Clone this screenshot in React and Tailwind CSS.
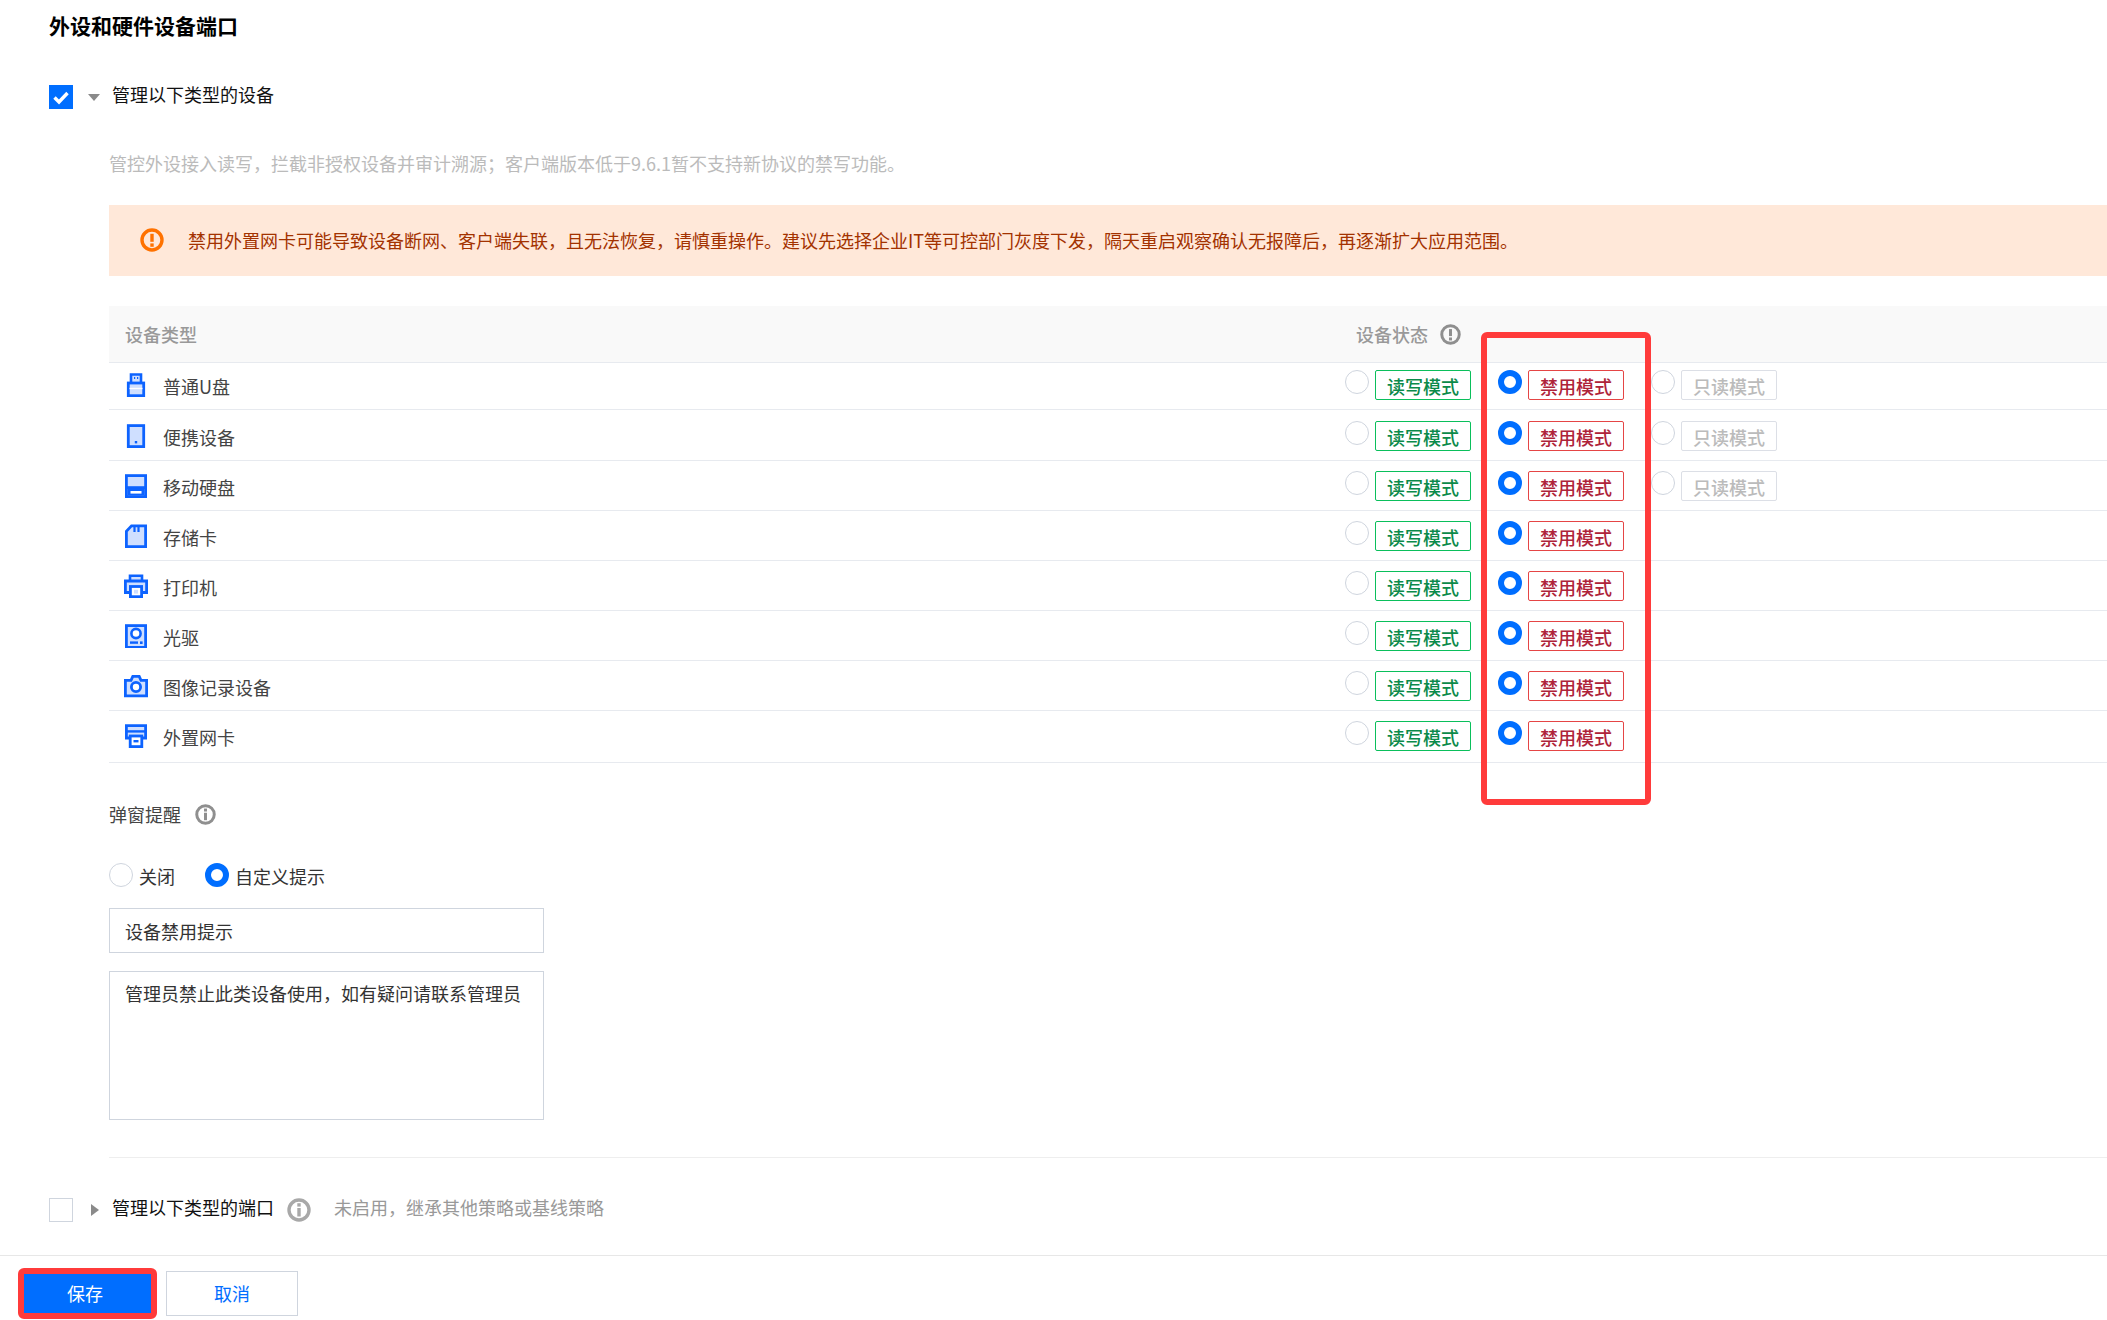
import React from "react";

const BLUE = "#0d63ff";
const PALE = "#cfdfff";

const icons = {
  usb: (
    <>
      <path d="M7 10V1.5h10V10" fill={PALE} stroke={BLUE} strokeWidth="2.6" />
      <rect x="4.3" y="10" width="15.4" height="12.7" fill={PALE} stroke={BLUE} strokeWidth="2.8" />
      <path d="M5.5 15.5h13" stroke="#fff" strokeWidth="1.4" />
      <path d="M10 5h1.2M13 5h1.2" stroke={BLUE} strokeWidth="2.2" />
    </>
  ),
  tablet: (
    <>
      <rect x="4.3" y="1.6" width="15.4" height="21" fill={PALE} stroke={BLUE} strokeWidth="2.8" />
      <rect x="10.8" y="17" width="2.4" height="2.4" fill={BLUE} />
    </>
  ),
  disk: (
    <>
      <rect x="2.4" y="1.6" width="19.2" height="21" fill={PALE} stroke={BLUE} strokeWidth="2.8" />
      <path d="M2 13.6h20" stroke={BLUE} strokeWidth="2.8" />
      <rect x="3.6" y="14.9" width="16.8" height="6.6" fill={BLUE} />
      <rect x="6.5" y="17" width="11" height="2.6" fill="#fff" />
    </>
  ),
  card: (
    <>
      <path d="M7.5 1.8H21.6V22.6H2.4V7.2Z" fill={PALE} stroke={BLUE} strokeWidth="2.8" />
      <path d="M10.5 2.5v5.5M14.5 2.5v5.5" stroke={BLUE} strokeWidth="2.2" />
    </>
  ),
  printer: (
    <>
      <path d="M6 7V1.8h12V7" fill={PALE} stroke={BLUE} strokeWidth="2.6" />
      <path d="M6 18.5H1.4V7h21.2v11.5H18" fill={PALE} stroke={BLUE} strokeWidth="2.8" />
      <rect x="6.4" y="12.5" width="11.2" height="10.2" fill="#fff" stroke={BLUE} strokeWidth="2.8" />
      <rect x="10" y="15.8" width="4" height="3.8" fill={PALE} />
    </>
  ),
  optical: (
    <>
      <rect x="2.4" y="1.6" width="19.2" height="21.8" fill={PALE} stroke={BLUE} strokeWidth="2.8" />
      <circle cx="12" cy="9.5" r="4.6" fill="#fff" stroke={BLUE} strokeWidth="2.6" />
      <path d="M6 18.6h8" stroke={BLUE} strokeWidth="2.4" />
      <rect x="16" y="17.4" width="2.6" height="2.6" fill={BLUE} />
    </>
  ),
  camera: (
    <>
      <path d="M1.4 6.4H7L8.8 2.4H15.2L17 6.4H22.6V21.8H1.4Z" fill={PALE} stroke={BLUE} strokeWidth="2.8" />
      <circle cx="12" cy="13" r="4.6" fill="#fff" stroke={BLUE} strokeWidth="2.8" />
    </>
  ),
  nic: (
    <>
      <path d="M6 14H2.4V1.6h19.2V14H18" fill={PALE} stroke={BLUE} strokeWidth="2.8" />
      <path d="M2 7.4h20" stroke={BLUE} strokeWidth="2.4" />
      <rect x="6.2" y="12" width="11.6" height="10.6" fill="#fff" stroke={BLUE} strokeWidth="2.8" />
      <path d="M9.5 17.2h5" stroke={BLUE} strokeWidth="2.4" />
    </>
  ),
};

const devices = [
  { name: "普通U盘", icon: "usb", h: "h-[47px]", pt: "pt-[7px]", lift: "pt-[2px]", readonly: true },
  { name: "便携设备", icon: "tablet", h: "h-[51px]", pt: "pt-[11px]", lift: "pt-[1px]", readonly: true },
  { name: "移动硬盘", icon: "disk", h: "h-[50px]", pt: "pt-[10px]", lift: "pt-[1px]", readonly: true },
  { name: "存储卡", icon: "card", h: "h-[50px]", pt: "pt-[10px]", lift: "pt-[1px]" },
  { name: "打印机", icon: "printer", h: "h-[50px]", pt: "pt-[10px]", lift: "pt-[1px]" },
  { name: "光驱", icon: "optical", h: "h-[50px]", pt: "pt-[10px]", lift: "pt-[1px]" },
  { name: "图像记录设备", icon: "camera", h: "h-[50px]", pt: "pt-[10px]", lift: "pt-[1px]" },
  { name: "外置网卡", icon: "nic", h: "h-[52px]", pt: "pt-[10px]", lift: "pt-[1px]" },
];

const Radio = ({ on }) =>
  on ? (
    <span className="block w-6 h-6 shrink-0 rounded-full bg-white border-[6px] border-[#006eff]" />
  ) : (
    <span className="block w-6 h-6 shrink-0 rounded-full bg-white border border-[#cfd5de]" />
  );

const Tag = ({ className, children }) => (
  <span className={`flex items-center justify-center w-[96px] h-[30px] ml-[6px] pt-[1px] shrink-0 rounded-[2px] border text-[18px] leading-[26px] ${className}`}>
    {children}
  </span>
);

const Info = ({ className, bang }) => (
  <svg viewBox="0 0 24 24" className={className}>
    <circle cx="12" cy="12" r="10" fill="none" stroke="currentColor" strokeWidth="3.4" />
    {bang ? (
      <>
        <path d="M12 5.8v8" stroke="currentColor" strokeWidth="3.4" />
        <rect x="10.3" y="15.4" width="3.4" height="3.4" fill="currentColor" />
      </>
    ) : (
      <>
        <rect x="10.3" y="5.2" width="3.4" height="3.4" fill="currentColor" />
        <path d="M12 10v8.5" stroke="currentColor" strokeWidth="3.4" />
      </>
    )}
  </svg>
);

export default function App() {
  return (
    <div
      className="relative w-[2107px] h-[1320px] overflow-hidden bg-white text-[18px]"
      style={{ fontFamily: '"Noto Sans CJK SC", "Noto Sans", sans-serif' }}
    >
      <div className="pl-[49px]">
        {/* Title */}
        <h1 className="mt-[9px] text-[21px] leading-[32px] font-bold text-black">外设和硬件设备端口</h1>

        {/* Manage devices */}
        <div className="flex items-center h-6 mt-[44px]">
          <span className="flex items-center justify-center w-6 h-6 bg-[#006eff]">
            <svg viewBox="0 0 24 24" className="w-6 h-6">
              <path d="M5.5 12.5l4.5 4.5 8.5-9" fill="none" stroke="#fff" strokeWidth="3.4" />
            </svg>
          </span>
          <svg viewBox="0 0 12 7" className="w-3 h-[7px] ml-[15px]">
            <path d="M0 0h12L6 7Z" fill="#8a8a8a" />
          </svg>
          <span className="ml-[12px] -mt-[6px] leading-[28px] text-[#111]">管理以下类型的设备</span>
        </div>
      </div>

      <div className="pl-[109px]">
        <p className="mt-[40px] leading-[28px] text-[#bbbbbb]">
          管控外设接入读写，拦截非授权设备并审计溯源；客户端版本低于9.6.1暂不支持新协议的禁写功能。
        </p>

        {/* Alert */}
        <div className="flex items-center h-[71px] mt-[28px] pl-[31px] bg-[#ffe8d9]">
          <Info bang className="w-6 h-6 -mt-[2px] text-[#ff7200]" />
          <span className="ml-[24px] -mt-[2px] leading-[28px] text-[#a33200]">
            禁用外置网卡可能导致设备断网、客户端失联，且无法恢复，请慎重操作。建议先选择企业IT等可控部门灰度下发，隔天重启观察确认无报障后，再逐渐扩大应用范围。
          </span>
        </div>

        {/* Device table */}
        <div className="mt-[30px]">
          <div className="flex items-center h-[57px] bg-[#f9f9f9] border-b border-[#e7eaef] text-[#999999] font-medium">
            <span className="w-[1247px] pl-4 shrink-0">设备类型</span>
            <span>设备状态</span>
            <Info bang className="w-[21px] h-[21px] ml-[12px] text-[#8f8f8f]" />
          </div>
          {devices.map((d) => (
            <div key={d.name} className={`flex items-start border-b border-[#e7eaef] ${d.h} ${d.pt}`}>
              <div className="flex items-center w-[1236px] h-6 mt-[3px] pl-[15px] shrink-0">
                <svg viewBox="0 0 24 24" className="w-6 h-6 shrink-0">
                  {icons[d.icon]}
                </svg>
                <span className={`ml-[15px] leading-[28px] text-[#444444] ${d.lift}`}>{d.name}</span>
              </div>
              <Radio />
              <Tag className="border-[#0abf5b] text-[#0b8a4a] font-medium">读写模式</Tag>
              <span className="ml-[27px]">
                <Radio on />
              </span>
              <Tag className="border-[#e54545] text-[#ae2339] font-medium">禁用模式</Tag>
              {d.readonly && (
                <>
                  <span className="ml-[27px]">
                    <Radio />
                  </span>
                  <Tag className="border-[#dcdfe6] text-[#bbbbbb] font-medium">只读模式</Tag>
                </>
              )}
            </div>
          ))}
        </div>

        {/* Popup reminder */}
        <div className="flex items-center h-7 mt-[37px]">
          <span className="leading-[28px] text-[#444444]">弹窗提醒</span>
          <Info className="w-[21px] h-[21px] ml-[14px] text-[#8f8f8f]" />
        </div>

        <div className="flex items-center h-6 mt-[35px] text-[#333333]">
          <Radio />
          <span className="ml-[6px] pt-[2px] leading-[28px]">关闭</span>
          <span className="ml-[30px]">
            <Radio on />
          </span>
          <span className="ml-[6px] pt-[2px] leading-[28px]">自定义提示</span>
        </div>

        <input
          readOnly
          value="设备禁用提示"
          className="block w-[435px] h-[45px] mt-[21px] px-[15px] border border-[#cfd5de] text-[#333333] outline-none"
        />
        <textarea
          readOnly
          value="管理员禁止此类设备使用，如有疑问请联系管理员"
          className="block w-[435px] h-[149px] mt-[18px] px-[15px] py-[7px] leading-[28px] border border-[#cfd5de] text-[#333333] outline-none resize-none"
        />

        <div className="h-px mt-[37px] bg-[#eeeeee]" />
      </div>

      {/* Manage ports */}
      <div className="flex items-center h-6 mt-[40px] pl-[49px]">
        <span className="w-6 h-6 border border-[#cfd5de]" />
        <svg viewBox="0 0 8 12" className="w-2 h-3 ml-[18px]">
          <path d="M0 0v12l8-6Z" fill="#8a8a8a" />
        </svg>
        <span className="ml-[13px] -mt-[7px] leading-[28px] text-[#111]">管理以下类型的端口</span>
        <Info className="w-6 h-6 ml-[13px] -mt-[1px] text-[#a8a8a8]" />
        <span className="ml-[23px] -mt-[7px] leading-[28px] text-[#999999]">未启用，继承其他策略或基线策略</span>
      </div>

      {/* Footer */}
      <div className="flex gap-[14px] mt-[33px] pt-[15px] pl-[20px] border-t border-[#e7e7e7]">
        <button className="relative w-[132px] h-[45px] pr-[2px] bg-[#006eff] text-white">
          保存
          <span className="absolute -left-[2px] -top-[3px] w-[139px] h-[51px] rounded-[6px] border-[6px] border-[#ff3b3b]" />
        </button>
        <button className="w-[132px] h-[45px] border border-[#cfd5de] text-[#006eff]">取消</button>
      </div>

      {/* Red annotation over the disabled column */}
      <div className="absolute left-[1481px] top-[332px] w-[170px] h-[473px] rounded-[6px] border-[6px] border-[#ff3b3b]" />
    </div>
  );
}
